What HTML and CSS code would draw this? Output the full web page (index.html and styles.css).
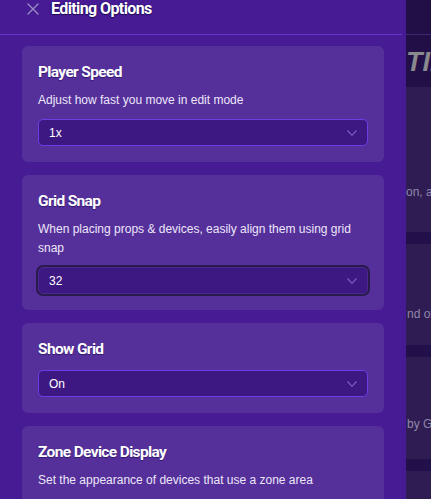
FILE: index.html
```html
<!DOCTYPE html>
<html>
<head>
<meta charset="utf-8">
<link rel="stylesheet" href="styles.css">
</head>
<body>
<div class="page">
  <div class="bg-top"></div>
  <div class="bg-hero"><span class="hero-title">TIMER</span></div>
  <div class="bg-content">
    <p class="bg-text first">on, and more</p>
    <div class="bg-list">
      <div class="bg-bar b1"></div>
      <p class="bg-text t2">nd others</p>
      <div class="bg-bar b2"></div>
      <p class="bg-text t3">by Gimkit</p>
      <div class="bg-bar b3"></div>
    </div>
  </div>
</div>

<aside class="panel">
  <header class="panel-header">
    <svg class="close" width="12" height="12" viewBox="0 0 12 12"><path d="M1 1 L11 11 M11 1 L1 11" stroke="#9a8fc4" stroke-width="1.3" fill="none" stroke-linecap="round"/></svg>
    <h1 class="panel-title">Editing Options</h1>
  </header>
  <div class="panel-body">
    <section class="card">
      <h2 class="card-title">Player Speed</h2>
      <p class="card-desc">Adjust how fast you move in edit mode</p>
      <div class="select"><span>1x</span><svg class="chev" width="10" height="6" viewBox="0 0 10 6"><path d="M0.5 0.5 L5 5.3 L9.5 0.5" stroke="#7d62c4" stroke-width="1.1" fill="none"/></svg></div>
    </section>
    <section class="card">
      <h2 class="card-title">Grid Snap</h2>
      <p class="card-desc">When placing props &amp; devices, easily align them using grid snap</p>
      <div class="select focused"><span>32</span><svg class="chev" width="10" height="6" viewBox="0 0 10 6"><path d="M0.5 0.5 L5 5.3 L9.5 0.5" stroke="#7d62c4" stroke-width="1.1" fill="none"/></svg></div>
    </section>
    <section class="card">
      <h2 class="card-title">Show Grid</h2>
      <div class="select"><span>On</span><svg class="chev" width="10" height="6" viewBox="0 0 10 6"><path d="M0.5 0.5 L5 5.3 L9.5 0.5" stroke="#7d62c4" stroke-width="1.1" fill="none"/></svg></div>
    </section>
    <section class="card">
      <h2 class="card-title">Zone Device Display</h2>
      <p class="card-desc">Set the appearance of devices that use a zone area</p>
      <div class="select"><span>Show All</span><svg class="chev" width="10" height="6" viewBox="0 0 10 6"><path d="M0.5 0.5 L5 5.3 L9.5 0.5" stroke="#7d62c4" stroke-width="1.1" fill="none"/></svg></div>
    </section>
  </div>
</aside>
</body>
</html>
```
FILE: styles.css
```css
html, body {
  margin: 0;
  padding: 0;
  height: 100%;
  overflow: hidden;
}
body {
  background: #2e1c52;
  font-family: "Liberation Sans", Arial, sans-serif;
  color: #fff;
}
.page {
  width: 100%;
}
.bg-top {
  height: 34px;
  background: #220f48;
  border-bottom: 1px solid #3a2870;
}
.bg-hero {
  height: 52px;
  background: #220f48;
  padding-left: 406px;
  box-sizing: border-box;
  padding-top: 14px;
}
.hero-title {
  display: block;
  font-family: "Liberation Sans", sans-serif;
  font-weight: 700;
  font-style: italic;
  font-size: 27px;
  line-height: 27px;
  color: #8a8a8e;
  white-space: nowrap;
  overflow: hidden;
  width: 25px;
}
.bg-content {
  padding-top: 98px;
}
.bg-text {
  margin: 0;
  font-size: 12px;
  line-height: 14px;
  color: #9187aa;
  padding-left: 406px;
  white-space: nowrap;
  overflow: hidden;
}
.bg-list {
  margin-left: 402px;
  border-left: 1px solid #6e5e92;
  height: 400px;
  padding-left: 3px;
  padding-top: 33px;
}
.bg-list .bg-text {
  padding-left: 1px;
}
.bg-bar {
  height: 12px;
  background: #22104a;
}
.t2 { margin-top: 63px; }
.b2 { margin-top: 24px; }
.t3 { margin-top: 60px; }
.b3 { margin-top: 28px; }

.panel {
  position: absolute;
  left: 0;
  top: 0;
  width: 402px;
  height: 100%;
  background: #461b93;
  border-right: 4px solid rgba(70, 27, 147, 0.82);
}
.panel-header {
  height: 34px;
  border-bottom: 1px solid #6436cf;
  display: flex;
  align-items: flex-start;
}
.close {
  margin-left: 27px;
  margin-top: 3px;
  flex: none;
}
.panel-title {
  margin: 0 0 0 12px;
  font-family: Roboto, Inter, sans-serif;
  font-size: 16px;
  line-height: 18px;
  font-weight: 700;
  letter-spacing: -0.6px;
  color: #fff;
  text-shadow: 0 1px 1px #1e0a55, -1px 0 1px #2a0f70;
}
.panel-body {
  padding: 11px 18px 0 22px;
  display: flex;
  flex-direction: column;
  gap: 13px;
}
.card {
  background: #55309b;
  border-radius: 6px;
  padding: 16px 16px;
}
.card-title {
  margin: 0 0 11px;
  font-family: Roboto, Inter, sans-serif;
  font-size: 15.5px;
  line-height: 20px;
  font-weight: 700;
  letter-spacing: -0.65px;
  color: #fff;
  text-shadow: 0 1px 1px rgba(30, 8, 80, 0.6);
}
.card-title + .card-desc {
  margin-top: -2px;
}
.card-desc {
  margin: 0 0 9px;
  font-size: 12px;
  line-height: 19px;
  color: #ece6f8;
}
.select {
  height: 27px;
  box-sizing: border-box;
  background: #3d1882;
  border: 1px solid #6a40e6;
  border-radius: 5px;
  display: flex;
  align-items: center;
  justify-content: space-between;
  padding: 0 10px 0 10px;
  font-size: 12px;
  color: #fff;
}
.select.focused {
  border-color: #4a2a8e;
  box-shadow: 0 0 0 2px #2b1a4e;
}
.chev {
  flex: none;
}
```
